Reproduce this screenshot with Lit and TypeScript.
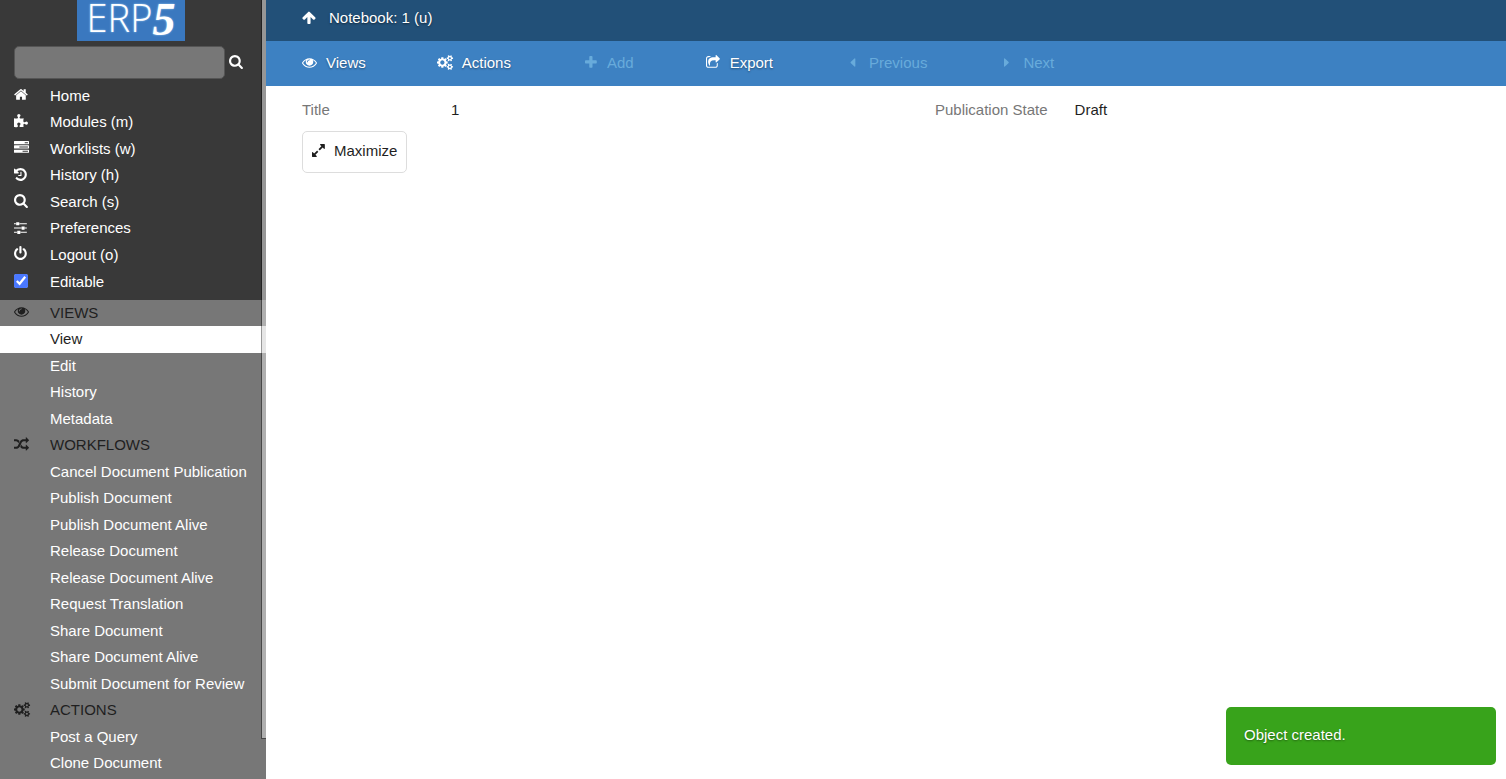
import { LitElement, html, css, svg } from "lit";
import { customElement, property, state } from "lit/decorators.js";

interface Glyph {
  x: number;
  w: number;
  d: string;
}

const GLYPHS: Record<string, Glyph> = {
  home: { x: 64, w: 1664, d: "M1472 992v480q0 26-19 45t-45 19h-384v-384h-256v384h-384q-26 0-45-19t-19-45v-480q0-1 .5-3t.5-3l575-474 575 474q1 2 1 6zm223-69l-62 74q-8 9-21 11h-3q-13 0-21-7l-692-577-692 577q-12 8-24 7-13-2-21-11l-62-74q-8-10-7-23.5t11-21.5l719-599q32-26 76-26t76 26l244 204v-195q0-14 9-23t23-9h192q14 0 23 9t9 23v408l219 182q10 8 11 21.5t-7 23.5z" },
  puzzle: { x: 64, w: 1664, d: "M1728 1098q0 81-44.5 135t-123.5 54q-41 0-77.5-17.5t-59-38-56.5-38-71-17.5q-110 0-110 124 0 39 16 115t15 115v5q-22 0-33 1-34 3-97.5 11.5t-115.5 13.5-98 5q-61 0-103-26.5t-42-83.5q0-37 17.5-71t38-56.5 38-59 17.5-77.5q0-79-54-123.5t-135-44.5q-84 0-143 45.5t-59 127.5q0 43 15 83t33.5 64.5 33.5 53 15 50.5q0 45-46 89-37 35-117 35-95 0-245-24-9-2-27.5-4t-27.5-4l-13-2q-1 0-3-1-2 0-2-1v-1024q2 1 17.5 3.5t34 5 21.5 3.5q150 24 245 24 80 0 117-35 46-44 46-89 0-22-15-50.5t-33.5-53-33.5-64.5-15-83q0-82 59-127.5t144-45.5q80 0 134 44.5t54 123.5q0 41-17.5 77.5t-38 59-38 56.5-17.5 71q0 57 42 83.5t103 26.5q64 0 180-15t163-17v2q-1 2-3.5 17.5t-5 34-3.5 21.5q-24 150-24 245 0 80 35 117 44 46 89 46 22 0 50.5-15t53-33.5 64.5-33.5 83-15q82 0 127.5 59t45.5 143z" },
  tasks: { x: 0, w: 1792, d: "M1024 1408h640v-128h-640v128zm-384-512h1024v-128h-1024v128zm640-512h384v-128h-384v128zm512 832v256q0 26-19 45t-45 19h-1664q-26 0-45-19t-19-45v-256q0-26 19-45t45-19h1664q26 0 45 19t19 45zm0-512v256q0 26-19 45t-45 19h-1664q-26 0-45-19t-19-45v-256q0-26 19-45t45-19h1664q26 0 45 19t19 45zm0-512v256q0 26-19 45t-45 19h-1664q-26 0-45-19t-19-45v-256q0-26 19-45t45-19h1664q26 0 45 19t19 45z" },
  history: { x: 128, w: 1536, d: "M1664 896q0 156-61 298t-164 245-245 164-298 61q-172 0-327-72.5t-264-204.5q-7-10-6.5-22.5t8.5-20.5l137-138q10-9 25-9 16 2 23 12 73 95 179 147t225 52q104 0 198.5-40.5t163.5-109.5 109.5-163.5 40.5-198.5-40.5-198.5-109.5-163.5-163.5-109.5-198.5-40.5q-98 0-188 35.5t-160 101.5l137 138q31 30 14 69-17 40-59 40h-448q-26 0-45-19t-19-45v-448q0-42 40-59 39-17 69 14l130 129q107-101 244.5-156.5t284.5-55.5q156 0 298 61t245 164 164 245 61 298zm-640-288v448q0 14-9 23t-23 9h-320q-14 0-23-9t-9-23v-64q0-14 9-23t23-9h224v-352q0-14 9-23t23-9h64q14 0 23 9t9 23z" },
  search: { x: 64, w: 1664, d: "M1216 832q0-185-131.5-316.5t-316.5-131.5-316.5 131.5-131.5 316.5 131.5 316.5 316.5 131.5 316.5-131.5 131.5-316.5zm512 832q0 52-38 90t-90 38q-54 0-90-38l-343-342q-179 124-399 124-143 0-273.5-55.5t-225-150-150-225-55.5-273.5 55.5-273.5 150-225 225-150 273.5-55.5 273.5 55.5 225 150 150 225 55.5 273.5q0 220-124 399l343 343q37 37 37 90z" },
  sliders: { x: 0, w: 1536, d: "M352 1408v128h-352v-128h352zm352-128q26 0 45 19t19 45v256q0 26-19 45t-45 19h-256q-26 0-45-19t-19-45v-256q0-26 19-45t45-19h256zm160-384v128h-864v-128h864zm-640-512v128h-224v-128h224zm1312 1024v128h-736v-128h736zm-960-1152q26 0 45 19t19 45v256q0 26-19 45t-45 19h-256q-26 0-45-19t-19-45v-256q0-26 19-45t45-19h256zm640 512q26 0 45 19t19 45v256q0 26-19 45t-45 19h-256q-26 0-45-19t-19-45v-256q0-26 19-45t45-19h256zm320 128v128h-224v-128h224zm0-512v128h-864v-128h864z" },
  power: { x: 128, w: 1536, d: "M1664 896q0 156-61 298t-164 245-245 164-298 61-298-61-245-164-164-245-61-298q0-182 80.5-343t226.5-270q43-32 95.5-25t83.5 50q32 42 24.5 94.5t-49.5 84.5q-98 74-151.5 181t-53.5 228q0 104 40.5 198.5t109.5 163.5 163.5 109.5 198.5 40.5 198.5-40.5 163.5-109.5 109.5-163.5 40.5-198.5q0-121-53.5-228t-151.5-181q-42-32-49.5-84.5t24.5-94.5q31-43 84-50t95 25q146 109 226.5 270t80.5 343zm-640-768v640q0 52-38 90t-90 38-90-38-38-90v-640q0-52 38-90t90-38 90 38 38 90z" },
  eye: { x: 0, w: 1792, d: "M1664 960q-152-236-381-353 61 104 61 225 0 185-131.5 316.5t-316.5 131.5-316.5-131.5-131.5-316.5q0-121 61-225-229 117-381 353 133 205 333.5 326.5t434.5 121.5 434.5-121.5 333.5-326.5zm-720-384q0-20-14-34t-34-14q-125 0-214.5 89.5t-89.5 214.5q0 20 14 34t34 14 34-14 14-34q0-86 61-147t147-61q20 0 34-14t14-34zm848 384q0 34-20 69-140 230-376.5 368.5t-499.5 138.5-499.5-139-376.5-368q-20-35-20-69t20-69q140-229 376.5-368t499.5-139 499.5 139 376.5 368q20 35 20 69z" },
  random: { x: 0, w: 1792, d: "M666 481q-60 92-137 273-22-45-37-72.5t-40.5-63.5-51-56.5-63-35-81.5-14.5h-224q-14 0-23-9t-9-23v-192q0-14 9-23t23-9h224q250 0 410 225zm1126 799q0 14-9 23l-320 320q-9 9-23 9-13 0-22.5-9.5t-9.5-22.5v-192q-32 0-85 .5t-81 1-73-1-71-5-64-10.5-63-18.5-58-28.5-59-40-55-53.5-56-69.5q59-93 136-273 22 45 37 72.5t40.5 63.5 51 56.5 63 35 81.5 14.5h256v-192q0-14 9-23t23-9q12 0 24 10l319 319q9 9 9 23zm0-896q0 14-9 23l-320 320q-9 9-23 9-13 0-22.5-9.5t-9.5-22.5v-192h-256q-48 0-87 15t-69 45-51 61.5-45 77.5q-32 62-78 171-29 66-49.5 111t-54 105-64 100-74 83-90 68.5-106.5 42-128 16.5h-224q-14 0-23-9t-9-23v-192q0-14 9-23t23-9h224q48 0 87-15t69-45 51-61.5 45-77.5q32-62 78-171 29-66 49.5-111t54-105 64-100 74-83 90-68.5 106.5-42 128-16.5h256v-192q0-14 9-23t23-9q12 0 24 10l319 319q9 9 9 23z" },
  cogs: { x: 0, w: 1920, d: "M896 896q0-106-75-181t-181-75-181 75-75 181 75 181 181 75 181-75 75-181zm768 512q0-52-38-90t-90-38-90 38-38 90q0 53 37.5 90.5t90.5 37.5 90.5-37.5 37.5-90.5zm0-1024q0-52-38-90t-90-38-90 38-38 90q0 53 37.5 90.5t90.5 37.5 90.5-37.5 37.5-90.5zm-384 421v185q0 10-7 19.5t-16 10.5l-155 24q-11 35-32 76 34 48 90 115 7 11 7 20 0 12-7 19-23 30-82.5 89.5t-78.5 59.5q-11 0-21-7l-115-90q-37 19-77 31-11 108-23 155-7 24-30 24h-186q-11 0-20-7.5t-10-17.5l-23-153q-34-10-75-31l-118 89q-7 7-20 7-11 0-21-8-144-133-144-160 0-9 7-19 10-14 41-53t47-61q-23-44-35-82l-152-24q-10-1-17-9.5t-7-19.5v-185q0-10 7-19.5t16-10.5l155-24q11-35 32-76-34-48-90-115-7-11-7-20 0-12 7-20 22-30 82-89t79-59q11 0 21 7l115 90q34-18 77-32 11-108 23-154 7-24 30-24h186q11 0 20 7.5t10 17.5l23 153q34 10 75 31l118-89q8-7 20-7 11 0 21 8 144 133 144 160 0 8-7 19-12 16-42 54t-45 60q23 48 34 82l152 23q10 2 17 10.5t7 19.5zm640 533v140q0 16-149 31-12 27-30 52 51 113 51 138 0 4-4 7-122 71-124 71-8 0-46-47t-52-68q-20 2-30 2t-30-2q-14 21-52 68t-46 47q-2 0-124-71-4-3-4-7 0-25 51-138-18-25-30-52-149-15-149-31v-140q0-16 149-31 13-29 30-52-51-113-51-138 0-4 4-7 4-2 35-20t59-34 30-16q8 0 46 46.5t52 67.5q20-2 30-2t30 2q51-71 92-112l6-2q4 0 124 70 4 3 4 7 0 25-51 138 17 23 30 52 149 15 149 31zm0-1024v140q0 16-149 31-12 27-30 52 51 113 51 138 0 4-4 7-122 71-124 71-8 0-46-47t-52-68q-20 2-30 2t-30-2q-14 21-52 68t-46 47q-2 0-124-71-4-3-4-7 0-25 51-138-18-25-30-52-149-15-149-31v-140q0-16 149-31 13-29 30-52-51-113-51-138 0-4 4-7 4-2 35-20t59-34 30-16q8 0 46 46.5t52 67.5q20-2 30-2t30 2q51-71 92-112l6-2q4 0 124 70 4 3 4 7 0 25-51 138 17 23 30 52 149 15 149 31z" },
  up: { x: 64, w: 1664, d: "M1675 971q0 51-37 90l-75 75q-38 38-91 38-54 0-90-38l-294-293v704q0 52-37.5 84.5t-90.5 32.5h-128q-53 0-90.5-32.5t-37.5-84.5v-704l-294 293q-36 38-90 38t-90-38l-75-75q-38-38-38-90 0-53 38-91l651-651q35-37 90-37 54 0 91 37l651 651q37 39 37 91z" },
  plus: { x: 192, w: 1408, d: "M1600 736v192q0 40-28 68t-68 28h-416v416q0 40-28 68t-68 28h-192q-40 0-68-28t-28-68v-416h-416q-40 0-68-28t-28-68v-192q0-40 28-68t68-28h416v-416q0-40 28-68t68-28h192q40 0 68 28t28 68v416h416q40 0 68 28t28 68z" },
  share: { x: 64, w: 1664, d: "M1472 989v259q0 119-84.5 203.5t-203.5 84.5h-832q-119 0-203.5-84.5t-84.5-203.5v-832q0-119 84.5-203.5t203.5-84.5h255q13 0 22.5 9.5t9.5 22.5q0 27-26 32-77 26-133 60-10 4-16 4h-112q-66 0-113 47t-47 113v832q0 66 47 113t113 47h832q66 0 113-47t47-113v-214q0-19 18-29 28-13 54-37 16-16 35-8 21 9 21 29zm237-496l-384 384q-18 19-45 19-12 0-25-5-39-17-39-59v-192h-160q-323 0-438 131-119 137-74 473 3 23-20 34-8 2-12 2-16 0-26-13-10-14-21-31t-39.5-68.5-49.5-99.5-38.5-114-17.5-122q0-49 3.5-91t14-90 28-88 47-81.5 68.5-74 94.5-61.5 124.5-48.5 159.5-30.5 196.5-11h160v-192q0-42 39-59 13-5 25-5 26 0 45 19l384 384q19 19 19 45t-19 45z" },
  left: { x: 576, w: 640, d: "M1216 448v896q0 26-19 45t-45 19-45-19l-448-448q-19-19-19-45t19-45l448-448q19-19 45-19t45 19 19 45z" },
  right: { x: 576, w: 640, d: "M1152 896q0 26-19 45l-448 448q-19 19-45 19t-45-19-19-45v-896q0-26 19-45t45-19 45 19l448 448q19 19 19 45z" },
  expand: { x: 128, w: 1536, d: "M883 1056q0 13-10 23l-332 332 144 144q19 19 19 45t-19 45-45 19h-448q-26 0-45-19t-19-45v-448q0-26 19-45t45-19 45 19l144 144 332-332q10-10 23-10t23 10l114 114q10 10 10 23zm781-864v448q0 26-19 45t-45 19-45-19l-144-144-332 332q-10 10-23 10t-23-10l-114-114q-10-10-10-23t10-23l332-332-144-144q-19-19-19-45t19-45 45-19h448q26 0 45 19t19 45z" },
};

@customElement("ui-icon")
class UiIcon extends LitElement {
  @property() name = "home";

  static styles = css`
    :host {
      display: flex;
      flex: none;
      width: 15px;
      height: 15px;
      padding-bottom: 2px;
      justify-content: var(--icon-align, center);
    }
    svg {
      display: block;
      flex: none;
      height: 15px;
      fill: currentColor;
      overflow: visible;
    }
  `;

  render() {
    const g = GLYPHS[this.name];
    return html`<svg viewBox="${g.x} 0 ${g.w} 1792" aria-hidden="true">${svg`<path d=${g.d}></path>`}</svg>`;
  }
}

const MAIN_LINKS = [
  ["home", "Home"],
  ["puzzle", "Modules (m)"],
  ["tasks", "Worklists (w)"],
  ["history", "History (h)"],
  ["search", "Search (s)"],
  ["sliders", "Preferences"],
  ["power", "Logout (o)"],
];

const SECTIONS = [
  { icon: "eye", title: "VIEWS", items: ["View", "Edit", "History", "Metadata"] },
  {
    icon: "random",
    title: "WORKFLOWS",
    items: [
      "Cancel Document Publication",
      "Publish Document",
      "Publish Document Alive",
      "Release Document",
      "Release Document Alive",
      "Request Translation",
      "Share Document",
      "Share Document Alive",
      "Submit Document for Review",
    ],
  },
  { icon: "cogs", title: "ACTIONS", items: ["Post a Query", "Clone Document"] },
];

const TOOLS = [
  { icon: "eye", label: "Views", enabled: true },
  { icon: "cogs", label: "Actions", enabled: true },
  { icon: "plus", label: "Add", enabled: false },
  { icon: "share", label: "Export", enabled: true },
  { icon: "left", label: "Previous", enabled: false },
  { icon: "right", label: "Next", enabled: false },
];

@customElement("side-panel")
class SidePanel extends LitElement {
  @state() private active = "View";

  static styles = css`
    :host {
      --icon-align: flex-start;
      display: block;
      position: relative;
      flex: none;
      width: 266px;
      height: 100vh;
      overflow: hidden;
      background: #777;
      color: #fff;
    }
    .top {
      background: #393939;
    }
    .logo {
      display: flex;
      align-items: flex-start;
      justify-content: center;
      width: 108px;
      height: 41px;
      margin: 0 auto 0 77px;
      background: #3a78bf;
      color: #fff;
      text-decoration: none;
      font: 300 38px/35px "Open Sans", sans-serif;
      text-shadow: 0 0 2px #a9d4f7;
    }
    .five {
      font: italic bold 46px/39px "Liberation Serif", serif;
    }
    .search {
      display: flex;
      align-items: flex-start;
      gap: 4px;
      padding: 5px 14px 0;
    }
    .search input {
      box-sizing: border-box;
      width: 211px;
      height: 33px;
      padding: 4px 8px;
      border: 1px solid #555;
      border-radius: 5px;
      background: #777;
      color: #fff;
      font: inherit;
    }
    .search button {
      box-sizing: content-box;
      display: flex;
      height: 1.5em;
      padding: 8px 0 6px;
      border: 0;
      background: none;
      color: inherit;
      font: inherit;
    }
    ul {
      margin: 0;
      padding: 0;
      list-style: none;
    }
    .row {
      display: flex;
      align-items: center;
      gap: 21px;
      margin: 0;
      padding: 2px 14px;
      color: inherit;
      font: inherit;
      text-decoration: none;
      white-space: nowrap;
    }
    .plain {
      padding-left: 50px;
    }
    .editable {
      padding: 3px 14px 6px;
    }
    .editable input {
      width: 14px;
      height: 14px;
      margin: 0 1px 3px 0;
      accent-color: #4a78ff;
    }
    .heading,
    .active {
      color: #1f1f1f;
    }
    .active {
      background: #fff;
    }
    .thumb {
      position: absolute;
      top: 0;
      right: 0;
      box-sizing: border-box;
      width: 5px;
      height: 739px;
      max-height: 95vh;
      border: solid rgba(0, 0, 0, 0.4);
      border-width: 0 0 1px 1px;
      background: rgba(214, 214, 214, 0.6);
      background-clip: padding-box;
    }
  `;

  render() {
    return html`
      <div class="top">
        <a class="logo" href="#home" aria-label="ERP5"><span>ERP</span><span class="five">5</span></a>
        <form class="search" role="search" @submit=${(e: Event) => e.preventDefault()}>
          <input type="search" aria-label="Search" />
          <button type="submit" aria-label="Search"><ui-icon name="search"></ui-icon></button>
        </form>
        <ul>
          ${MAIN_LINKS.map(
            ([icon, label]) =>
              html`<li><a class="row" href="#"><ui-icon name=${icon}></ui-icon>${label}</a></li>`
          )}
        </ul>
        <label class="row editable"><input type="checkbox" checked />Editable</label>
      </div>
      ${SECTIONS.map(
        (s) => html`
          <h2 class="row heading"><ui-icon name=${s.icon}></ui-icon>${s.title}</h2>
          <ul>
            ${s.items.map(
              (label) => html`<li>
                <a
                  class="row plain ${label === this.active ? "active" : ""}"
                  href="#"
                  @click=${() => (this.active = label)}
                  >${label}</a
                >
              </li>`
            )}
          </ul>
        `
      )}
      <div class="thumb"></div>
    `;
  }
}

@customElement("app-root")
class AppRoot extends LitElement {
  static styles = css`
    :host {
      display: flex;
      height: 100vh;
      overflow: hidden;
      background: #fff;
      color: #1f1f1f;
      font: 15px/1.5 "Liberation Sans", Arial, sans-serif;
    }
    .page {
      flex: 1;
      min-width: 0;
    }
    .title {
      --icon-align: flex-start;
      box-sizing: border-box;
      height: 41px;
      margin: 0;
      padding: 7px 36px;
      background: #225078;
      font: inherit;
    }
    .title a {
      display: flex;
      align-items: center;
      gap: 12px;
      width: fit-content;
      color: #fff;
      text-decoration: none;
      text-shadow: 0 1px 2px rgba(0, 0, 0, 0.5);
    }
    .tools {
      display: flex;
      gap: 72px;
      padding: 0 36px;
      height: 45px;
      background: #3d81c2;
    }
    .tools button {
      display: flex;
      align-items: center;
      gap: 9px;
      padding: 0;
      border: 0;
      background: none;
      color: #fff;
      font: inherit;
      text-shadow: 0 1px 2px rgba(0, 0, 0, 0.4);
    }
    .tools button:disabled {
      color: #68abdb;
      text-shadow: none;
    }
    .content {
      padding: 13px 36px;
    }
    .fields {
      display: grid;
      grid-template-columns: 1fr 1fr;
      column-gap: 98px;
      margin: 0 0 9px;
    }
    .field {
      display: flex;
      gap: 27px;
    }
    dt {
      min-width: 122px;
      color: #777;
    }
    .state dt {
      min-width: 0;
    }
    dd {
      margin: 0;
    }
    .maximize {
      display: flex;
      align-items: center;
      gap: 8px;
      height: 42px;
      padding: 0 9px 0 8px;
      border: 1px solid #ddd;
      border-radius: 5px;
      background: #fff;
      color: inherit;
      font: inherit;
    }
    .toast {
      position: absolute;
      right: 10px;
      bottom: 14px;
      box-sizing: border-box;
      width: 270px;
      padding: 17px 18px 19px;
      border-radius: 5px;
      background: #38a31b;
      color: #fff;
      text-shadow: 0 1px 2px rgba(0, 0, 0, 0.4);
    }
  `;

  render() {
    return html`
      <side-panel></side-panel>
      <div class="page">
        <h1 class="title">
          <a href="#up"><ui-icon name="up"></ui-icon>Notebook: 1 (u)</a>
        </h1>
        <nav class="tools">
          ${TOOLS.map(
            (t) => html`<button type="button" ?disabled=${!t.enabled}><ui-icon name=${t.icon}></ui-icon>${t.label}</button>`
          )}
        </nav>
        <main class="content">
          <dl class="fields">
            <div class="field"><dt>Title</dt><dd>1</dd></div>
            <div class="field state"><dt>Publication State</dt><dd>Draft</dd></div>
          </dl>
          <button class="maximize" type="button"><ui-icon name="expand"></ui-icon>Maximize</button>
        </main>
      </div>
      <div class="toast" role="status">Object created.</div>
    `;
  }
}
